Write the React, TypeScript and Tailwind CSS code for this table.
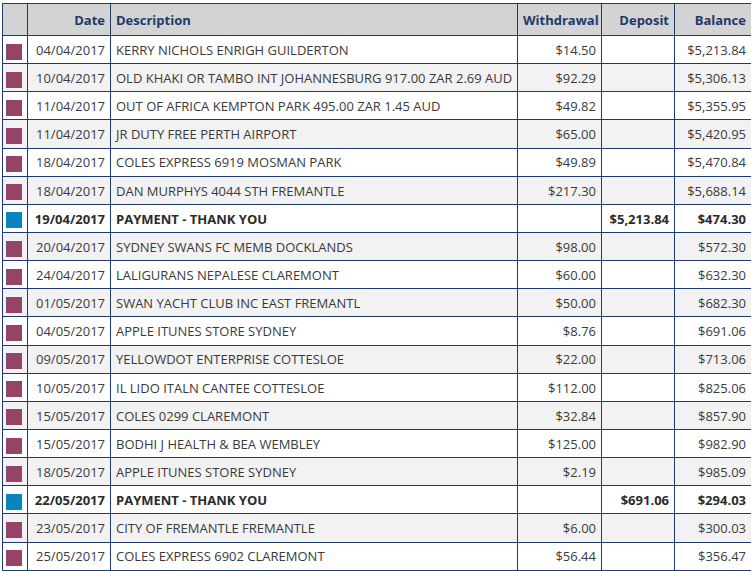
import type {FC} from "react";

type Row = {
  date: string;
  desc: string;
  withdrawal?: string;
  deposit?: string;
  balance: string;
  payment?: boolean;
};

const rows: Row[] = [
  {date: "04/04/2017", desc: "KERRY NICHOLS ENRIGH GUILDERTON", withdrawal: "$14.50", balance: "$5,213.84"},
  {date: "10/04/2017", desc: "OLD KHAKI OR TAMBO INT JOHANNESBURG 917.00 ZAR 2.69 AUD", withdrawal: "$92.29", balance: "$5,306.13"},
  {date: "11/04/2017", desc: "OUT OF AFRICA KEMPTON PARK 495.00 ZAR 1.45 AUD", withdrawal: "$49.82", balance: "$5,355.95"},
  {date: "11/04/2017", desc: "JR DUTY FREE PERTH AIRPORT", withdrawal: "$65.00", balance: "$5,420.95"},
  {date: "18/04/2017", desc: "COLES EXPRESS 6919 MOSMAN PARK", withdrawal: "$49.89", balance: "$5,470.84"},
  {date: "18/04/2017", desc: "DAN MURPHYS 4044 STH FREMANTLE", withdrawal: "$217.30", balance: "$5,688.14"},
  {date: "19/04/2017", desc: "PAYMENT - THANK YOU", deposit: "$5,213.84", balance: "$474.30", payment: true},
  {date: "20/04/2017", desc: "SYDNEY SWANS FC MEMB DOCKLANDS", withdrawal: "$98.00", balance: "$572.30"},
  {date: "24/04/2017", desc: "LALIGURANS NEPALESE CLAREMONT", withdrawal: "$60.00", balance: "$632.30"},
  {date: "01/05/2017", desc: "SWAN YACHT CLUB INC EAST FREMANTL", withdrawal: "$50.00", balance: "$682.30"},
  {date: "04/05/2017", desc: "APPLE ITUNES STORE SYDNEY", withdrawal: "$8.76", balance: "$691.06"},
  {date: "09/05/2017", desc: "YELLOWDOT ENTERPRISE COTTESLOE", withdrawal: "$22.00", balance: "$713.06"},
  {date: "10/05/2017", desc: "IL LIDO ITALN CANTEE COTTESLOE", withdrawal: "$112.00", balance: "$825.06"},
  {date: "15/05/2017", desc: "COLES 0299 CLAREMONT", withdrawal: "$32.84", balance: "$857.90"},
  {date: "15/05/2017", desc: "BODHI J HEALTH & BEA WEMBLEY", withdrawal: "$125.00", balance: "$982.90"},
  {date: "18/05/2017", desc: "APPLE ITUNES STORE SYDNEY", withdrawal: "$2.19", balance: "$985.09"},
  {date: "22/05/2017", desc: "PAYMENT - THANK YOU", deposit: "$691.06", balance: "$294.03", payment: true},
  {date: "23/05/2017", desc: "CITY OF FREMANTLE FREMANTLE", withdrawal: "$6.00", balance: "$300.03"},
  {date: "25/05/2017", desc: "COLES EXPRESS 6902 CLAREMONT", withdrawal: "$56.44", balance: "$356.47"},
];

const border = "border border-[#1f3a68]";
const cell = `${border} px-[5px] pt-[2px] whitespace-nowrap overflow-hidden`;

const App: FC = () => {
  return (
    <div className="bg-white min-h-screen pt-[3px] pl-[2px] font-['Open_Sans',sans-serif] text-[13px] text-[#3a3a3a]">
      <table className="table-fixed border-collapse w-[749px]">
        <colgroup>
          <col className="w-[25px]" />
          <col className="w-[83px]" />
          <col className="w-[407px]" />
          <col className="w-[84px]" />
          <col className="w-[73px]" />
          <col className="w-[77px]" />
        </colgroup>
        {/* Header */}
        <thead>
          <tr className="h-[32px] bg-[#d3d3d3] text-[#1f3a68] font-bold">
            <th className={border}></th>
            <th className={`${cell} text-right`}>Date</th>
            <th className={`${cell} text-left`}>Description</th>
            <th className={`${cell} text-right`}>Withdrawal</th>
            <th className={`${cell} text-right`}>Deposit</th>
            <th className={`${cell} text-right`}>Balance</th>
          </tr>
        </thead>
        <tbody>
          {rows.map((r, i) => (
            <tr
              key={i}
              className={`h-[28.15px] ${i % 2 === 1 ? "bg-[#f2f2f2]" : "bg-white"} ${
                r.payment ? "font-bold text-[#2b2b2b]" : ""
              }`}
            >
              <td className={border}>
                <div
                  className={`w-4 h-4 ml-[3px] mt-[4px] ${
                    r.payment ? "bg-[#0a84be]" : "bg-[#954468]"
                  }`}
                />
              </td>
              <td className={`${cell} text-right`}>{r.date}</td>
              <td className={`${cell} text-left`}>{r.desc}</td>
              <td className={`${cell} text-right`}>{r.withdrawal}</td>
              <td className={`${cell} text-right`}>{r.deposit}</td>
              <td className={`${cell} text-right`}>{r.balance}</td>
            </tr>
          ))}
        </tbody>
      </table>
    </div>
  );
};

export default App;
